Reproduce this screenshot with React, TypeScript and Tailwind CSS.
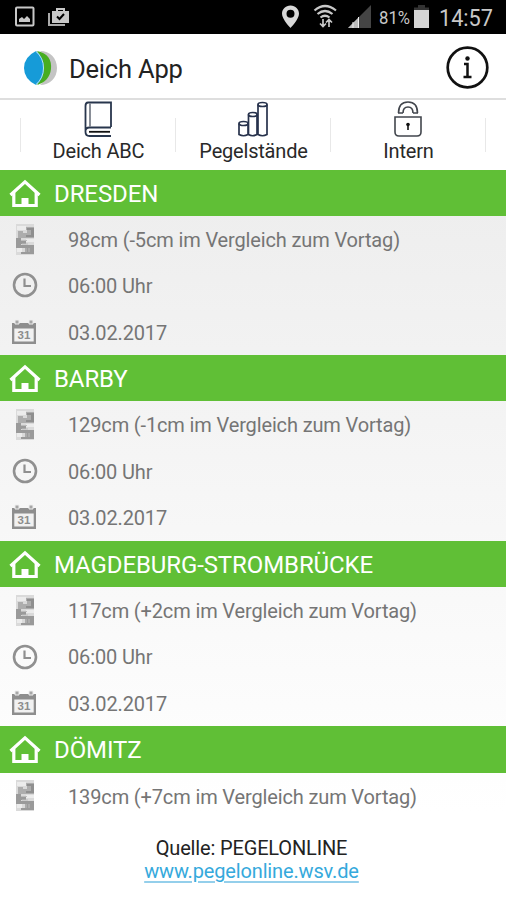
import React from "react";

type Station = { name: string; level: string; full: boolean };

const stations: Station[] = [
  { name: "DRESDEN", level: "98cm (-5cm im Vergleich zum Vortag)", full: true },
  { name: "BARBY", level: "129cm (-1cm im Vergleich zum Vortag)", full: true },
  { name: "MAGDEBURG-STROMBRÜCKE", level: "117cm (+2cm im Vergleich zum Vortag)", full: true },
  { name: "DÖMITZ", level: "139cm (+7cm im Vergleich zum Vortag)", full: false },
];

function House() {
  return (
    <svg width="32" height="30" viewBox="0 0 32 30" fill="none" stroke="white" strokeWidth="3.200">
      <path d="M1.500 16 16 2.800 30.500 16" />
      <path d="M4.800 13.500V26.500H27.200V13.500" />
      <path d="M12.500 19h7v8h-7z" fill="white" stroke="none" />
    </svg>
  );
}

function Gauge() {
  return (
    <svg width="18" height="31" viewBox="0 0 18 31">
      <path d="M0 0h18v31H0z" fill="#dadada" />
      <path d="M1 2h9v4H1zM1 23h5v5H1zM10 15h8v3h-8z" fill="#ececec" />
      <path d="M10 3h8v11H2V7h5v2h4V6h-1z" fill="#adadad" />
      <path d="M11 4h7v9h-8v-2h5V6h-4z" fill="#8f8f8f" />
      <path d="M0 14h5v3h5v3H5v1h13v9H5v-2h4v-4H0z" fill="#9a9a9a" />
      <path d="M5 16.500h6M6 20h6M10 24v4M13 24v4" stroke="#bdbdbd" />
    </svg>
  );
}

function Clock() {
  return (
    <svg width="26" height="26" viewBox="0 0 26 26" fill="none" stroke="#909090" strokeWidth="2.600">
      <circle cx="13" cy="13" r="11" />
      <path d="M12.500 6.500V14H19" strokeWidth="2.200" />
    </svg>
  );
}

function Calendar() {
  return (
    <svg className="mr-[3px]" width="26" height="26" viewBox="0 0 26 26">
      <path d="M1 4h24v21H1z" fill="#8e8e8e" />
      <path d="M3.300 9.500h19.400V22.500H3.300z" fill="#f1f1f1" />
      <path d="M4 1h4v4H4zM18 1h4v4h-4z" fill="#a6a6a6" stroke="#eee" />
      <text x="13" y="20" textAnchor="middle" fontSize="11.500" fontWeight="700" fill="#8d8d8d" fontFamily="Liberation Sans, sans-serif">31</text>
    </svg>
  );
}

function Row({ icon, children }: { icon: React.ReactNode; children: React.ReactNode }) {
  return (
    <div className="flex h-[46.4px] items-center text-[20px] text-[#757575]">
      <div className="flex w-[50px] justify-center">{icon}</div>
      <div className="pt-[1.5px] pl-[18px] tracking-[-0.14px] whitespace-nowrap">{children}</div>
    </div>
  );
}

function Tab({ label, icon }: { label: string; icon: React.ReactNode }) {
  return (
    <div className="relative flex w-[155px] flex-col items-center">
      <div className="h-[40px] pt-px pr-[2px]">{icon}</div>
      <div className="text-[20px] leading-[22px] tracking-[-0.2px] text-[#292929]">{label}</div>
      <div className="absolute top-[18px] right-0 h-[34px] w-px bg-[#e8e8e8]" />
    </div>
  );
}

export default function App() {
  return (
    <div className="flex h-[900px] w-[506px] flex-col overflow-hidden bg-white font-['Roboto',sans-serif]">
      <div className="flex h-[34px] shrink-0 items-center bg-black text-[#c8c8c8]">
        <svg width="506" height="34" viewBox="0 0 506 34" fill="none">
          <rect x="16" y="7.500" width="17.500" height="18" rx="1" stroke="#c8c8c8" strokeWidth="2" />
          <path d="M19 22v-3l3-2 2 2 3-3 3 3v3z" fill="#c8c8c8" />
          <path d="M49 13v12h16" stroke="#aaa" strokeWidth="2" />
          <path d="M52 11h17v12H52z" fill="#c8c8c8" />
          <path d="M57 12V9h7v3" stroke="#c8c8c8" strokeWidth="2" />
          <path d="m57 16.500 2.500 2.500 4.500-5" stroke="black" strokeWidth="2" />
          <path d="M290.500 5.500c-5 0-8.500 3.700-8.500 8.300 0 5.500 8.500 14.200 8.500 14.200s8.500-8.700 8.500-14.200c0-4.600-3.500-8.300-8.500-8.300zm0 4.300a4 4 0 1 1 0 8 4 4 0 0 1 0-8z" fill="#d8d8d8" />
          <path d="M314.500 10.500q10.500-9 21.500 0M317.500 14q7.500-6 15 0M320.500 17.500q4.500-3.500 9 0" stroke="#c8c8c8" strokeWidth="2.200" />
          <path d="M323 19v7m-3-2.500 3 3 3-3M329 27v-7m-3 2.500 3-3 3 3" stroke="#c8c8c8" strokeWidth="1.700" />
          <path d="M371 5v23h-23z" fill="#444" />
          <path d="M359 17v11h-11z" fill="#bbb" />
          <path d="M353 22v6M358.500 17v11" stroke="#eee" />
          <text x="379" y="24" fontSize="18" fill="#c8c8c8" textLength="31" lengthAdjust="spacingAndGlyphs">81%</text>
          <path d="M414 10h15v18h-15z" fill="#d4d4d4" />
          <path d="M418 5h7v2.500h4V10h-15V7.500h4z" fill="#333" />
          <text x="439" y="25.500" fontSize="23.500" fill="#c8c8c8" textLength="54" lengthAdjust="spacingAndGlyphs">14:57</text>
        </svg>
      </div>
      <header className="flex h-[66px] shrink-0 items-center border-b-2 border-[#dedede] pt-[3px] pr-[17px] pl-[23px]">
        <svg width="35" height="36" viewBox="0 0 35 36">
          <path d="M17 1C27 1 34 8 34 18s-7 17-17 17q10-8 10-17T17 1z" fill="#c4c4c4" />
          <path d="M14 1C25 3 29 10 28 19s-7 14-14 16q6-8 6-17T14 1z" fill="#48ad20" />
          <path d="M13 1q8 6 8 17t-8 17Q1 29 1 18T13 1z" fill="#169bd8" />
          <path d="M13 1.500q7.500 6.500 7.500 16.500T13 34.500" fill="none" stroke="#b9e4ee" />
        </svg>
        <h1 className="pt-[3px] pl-[11px] text-[25.5px] leading-[36px] font-normal tracking-[-0.2px] text-[#222]">Deich App</h1>
        <svg className="ml-auto" width="43" height="43" viewBox="0 0 43 43" fill="none" stroke="#111">
          <circle cx="21.500" cy="21.500" r="19.800" strokeWidth="2.700" />
          <circle cx="21.500" cy="12.500" r="2.200" fill="#111" stroke="none" />
          <path d="M18 18h3.500v12.500M17.500 31h8" strokeWidth="2.500" />
        </svg>
      </header>
      <nav className="flex h-[69.5px] shrink-0 pl-[21px]">
        <div className="mt-[18px] -ml-px h-[34px] w-px bg-[#e8e8e8]" />
        <Tab label="Deich ABC" icon={
          <svg width="28" height="37" viewBox="0 0 28 37" fill="none" stroke="#28364d" strokeWidth="1.800">
            <path d="M27 26V1.500H4Q1.500 1.500 1.500 5v26q0 4 4 4H27M1.500 30q0-3.500 4-3.500H27" />
            <path d="M6 2v24" stroke="#7c828c" /><path d="M5 30.800h21" stroke="#111" />
          </svg>} />
        <Tab label="Pegelstände" icon={
          <svg width="30" height="37" viewBox="0 0 30 37" fill="none" stroke="#27324c" strokeWidth="1.700">
            <path d="M1 22.500v11q4.500 2.500 9 0v-11M10.500 13.500v20q4 2.500 8.500 0v-20M20 3.500v30q4.500 2.500 9 0v-30" />
            <ellipse cx="5.500" cy="22.500" rx="4.500" ry="2" /><ellipse cx="14.800" cy="13.500" rx="4.300" ry="2" /><ellipse cx="24.500" cy="3.500" rx="4.500" ry="2" />
          </svg>} />
        <Tab label="Intern" icon={
          <svg width="28" height="37" viewBox="0 0 28 37" fill="none" stroke="#42464d" strokeWidth="1.600">
            <path d="M1 16h26v15q0 4-4 4H5q-4 0-4-4zM4.500 12q0-11 9.500-11t9.500 11M9 12q0-6 5-6t5 6" />
            <path d="M4 12h5m10 0h5" /><path d="M14 22v7" stroke="#111" strokeWidth="1.600" /><circle cx="14" cy="23.500" r="1.800" fill="#111" stroke="none" />
          </svg>} />
      </nav>
      <main className="h-[642px] shrink-0 overflow-hidden bg-linear-to-b from-[#ededed] to-white">
        {stations.map((s) => (
          <section key={s.name}>
            <h2 className="flex h-[46.4px] items-center bg-[#60bf36] pt-[2px] text-[24px] font-normal text-white">
              <div className="flex w-[54px] pl-[9px]"><House /></div>
              <span className="tracking-[-0.1px] whitespace-nowrap">{s.name}</span>
            </h2>
            <Row icon={<Gauge />}>{s.level}</Row>
            {s.full && <Row icon={<Clock />}>06:00 Uhr</Row>}
            {s.full && <Row icon={<Calendar />}>03.02.2017</Row>}
          </section>
        ))}
      </main>
      <footer className="mt-[25px] flex shrink-0 flex-col items-center pr-[3px] text-[20px] leading-[23.5px] text-[#222]">
        <div className="tracking-[-0.15px]">Quelle: PEGELONLINE</div>
        <a className="tracking-[-0.15px] text-[#35a9dc] underline decoration-[#94cfeb] underline-offset-[3px]">www.pegelonline.wsv.de</a>
      </footer>
    </div>
  );
}
